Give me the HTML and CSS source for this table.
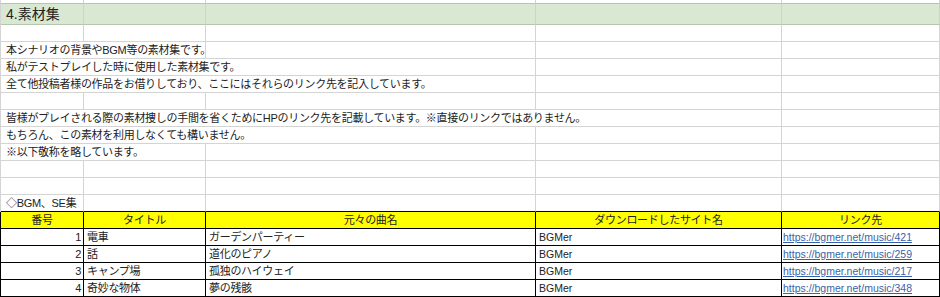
FILE: index.html
```html
<!DOCTYPE html>
<html lang="ja">
<head>
<meta charset="utf-8">
<title>4.素材集</title>
<link rel="stylesheet" href="styles.css">
</head>
<body>
<div class="sheet">
  <div class="row r-top"><div class="c"></div><div class="c"></div><div class="c"></div><div class="c"></div><div class="c"></div></div>
  <div class="row r-title"><div class="c title">4.素材集</div><div class="c"></div><div class="c"></div><div class="c"></div><div class="c"></div></div>
  <div class="row"><div class="c"></div><div class="c"></div><div class="c"></div><div class="c"></div><div class="c"></div></div>
  <div class="row"><div class="c s2">本シナリオの背景やBGM等の素材集です。</div><div class="c"></div><div class="c"></div><div class="c"></div></div>
  <div class="row"><div class="c s3">私がテストプレイした時に使用した素材集です。</div><div class="c"></div><div class="c"></div></div>
  <div class="row"><div class="c s3">全て他投稿者様の作品をお借りしており、ここにはそれらのリンク先を記入しています。</div><div class="c"></div><div class="c"></div></div>
  <div class="row"><div class="c"></div><div class="c"></div><div class="c"></div><div class="c"></div><div class="c"></div></div>
  <div class="row"><div class="c s4">皆様がプレイされる際の素材捜しの手間を省くためにHPのリンク先を記載しています。※直接のリンクではありません。</div><div class="c"></div></div>
  <div class="row"><div class="c s3">もちろん、この素材を利用しなくても構いません。</div><div class="c"></div><div class="c"></div></div>
  <div class="row"><div class="c s2">※以下敬称を略しています。</div><div class="c"></div><div class="c"></div><div class="c"></div></div>
  <div class="row"><div class="c"></div><div class="c"></div><div class="c"></div><div class="c"></div><div class="c"></div></div>
  <div class="row"><div class="c"></div><div class="c"></div><div class="c"></div><div class="c"></div><div class="c"></div></div>
  <div class="row r-caption"><div class="c">◇BGM、SE集</div><div class="c"></div><div class="c"></div><div class="c"></div><div class="c"></div></div>
  <div class="row r-table r-head"><div class="c ctr">番号</div><div class="c ctr">タイトル</div><div class="c ctr">元々の曲名</div><div class="c ctr">ダウンロードしたサイト名</div><div class="c ctr">リンク先</div></div>
  <div class="row r-table"><div class="c num">1</div><div class="c">電車</div><div class="c">ガーデンパーティー</div><div class="c lat">BGMer</div><div class="c lk"><a class="link" href="#">https://bgmer.net/music/421</a></div></div>
  <div class="row r-table"><div class="c num">2</div><div class="c">話</div><div class="c">道化のピアノ</div><div class="c lat">BGMer</div><div class="c lk"><a class="link" href="#">https://bgmer.net/music/259</a></div></div>
  <div class="row r-table"><div class="c num">3</div><div class="c">キャンプ場</div><div class="c">孤独のハイウェイ</div><div class="c lat">BGMer</div><div class="c lk"><a class="link" href="#">https://bgmer.net/music/217</a></div></div>
  <div class="row r-table"><div class="c num">4</div><div class="c">奇妙な物体</div><div class="c">夢の残骸</div><div class="c lat">BGMer</div><div class="c lk"><a class="link" href="#">https://bgmer.net/music/348</a></div></div>
</div>
</body>
</html>
```

FILE: styles.css
```css
html, body {
  margin: 0;
  padding: 0;
  background: #ffffff;
  overflow: hidden;
}

.sheet {
  width: 940px;
  font-family: "Liberation Sans", "Noto Sans CJK JP", sans-serif;
  font-size: 11px;
  letter-spacing: -0.3px;
  color: #222222;
}

.row {
  display: grid;
  grid-template-columns: 83px 122px 330px 246px 158px;
  height: 17px;
  border-left: 1px solid #d4d4d4;
}

.c {
  box-sizing: border-box;
  height: 100%;
  border-right: 1px solid #d4d4d4;
  border-bottom: 1px solid #d4d4d4;
  padding: 0 3px 0 5px;
  line-height: 16px;
  white-space: nowrap;
  overflow: visible;
}

.s2 { grid-column: span 2; }
.s3 { grid-column: span 3; }
.s4 { grid-column: span 4; }

.r-top {
  height: 4px;
}

.r-title {
  height: 21px;
  background: #d9e8d2;
}

.r-title .c {
  border-bottom-color: #b5c5ae;
  border-right-color: #c9d6c3;
}

.r-top .c {
  border-bottom-color: #b5c5ae;
}

.title {
  font-size: 14px;
  line-height: 20px;
  letter-spacing: 0;
}

.r-caption .c {
  border-bottom-color: #000000;
}

.r-table {
  border-left-color: #000000;
}

.r-table .c {
  border-right-color: #000000;
  border-bottom-color: #000000;
  padding-left: 3px;
}

.r-head {
  background: #ffff00;
}

.ctr {
  text-align: center;
}

.num {
  text-align: right;
  padding-right: 2px;
}

.lat {
  letter-spacing: 0;
  font-size: 10.5px;
}

.r-table .lk {
  padding-left: 1px;
}

.link {
  color: #3a62a8;
  text-decoration: underline;
  letter-spacing: 0;
  font-size: 10.5px;
}
```
